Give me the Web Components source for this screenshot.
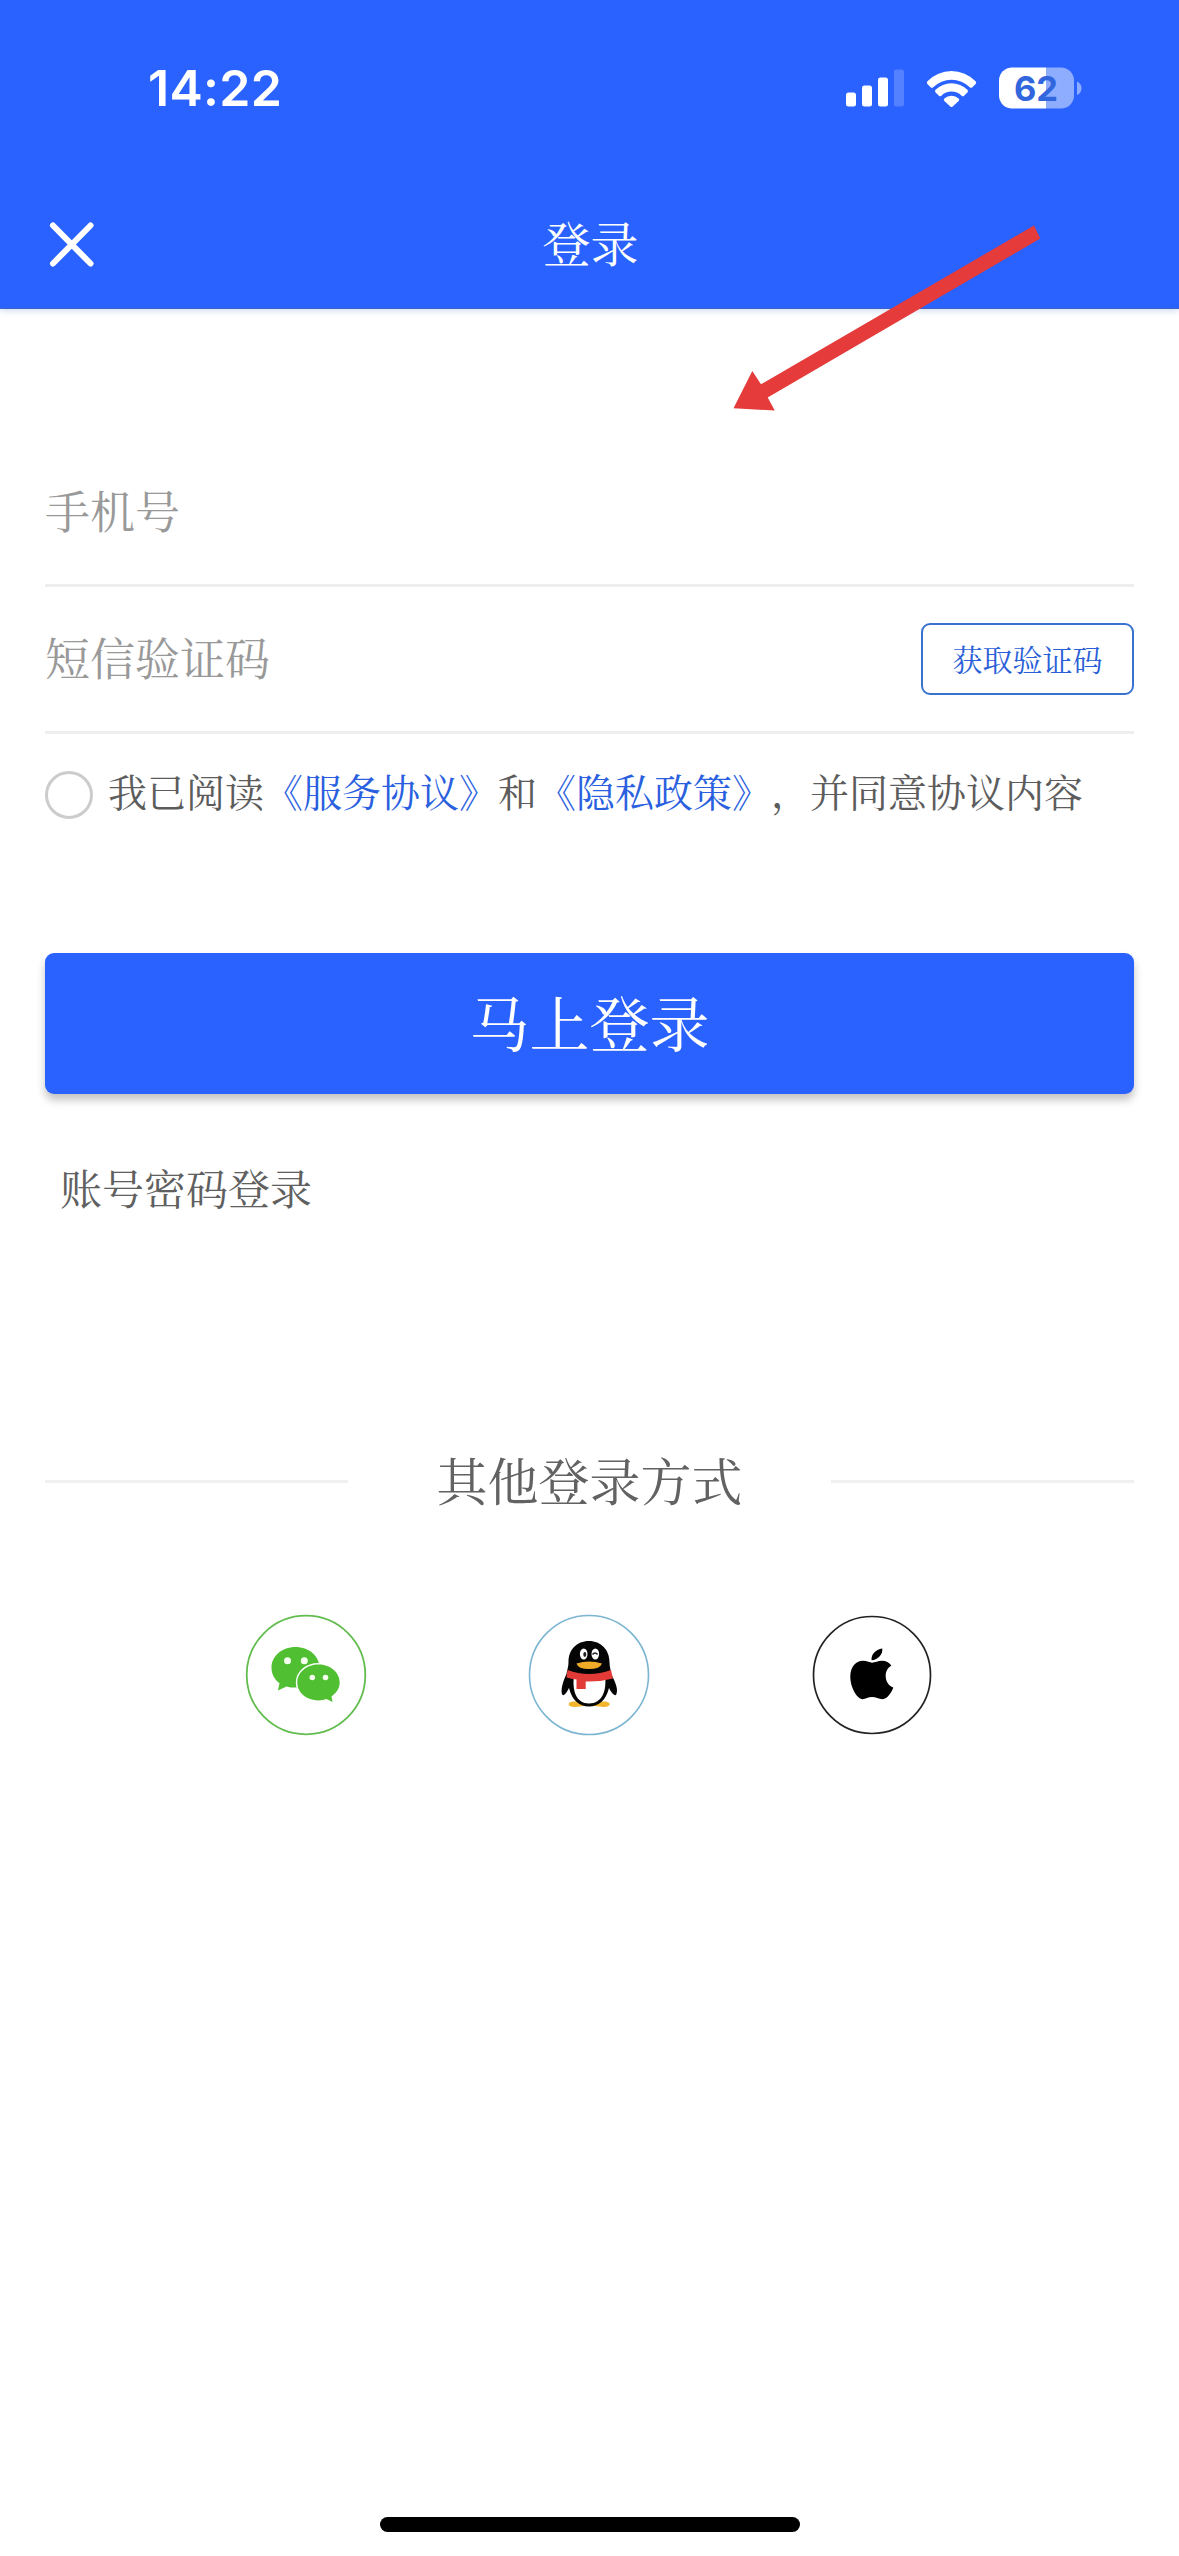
<!DOCTYPE html>
<html lang="zh-CN">
<head>
<meta charset="utf-8">
<title>登录</title>
<style>
html,body{margin:0;background:#fff}
body{width:1179px;height:2556px;overflow:hidden;font-family:"Noto Serif CJK SC","Noto Serif SC","Source Han Serif SC","Songti SC","Noto Sans CJK SC",serif;color:#666;text-spacing-trim:space-all}
</style>
</head>
<body>
<login-page></login-page>
<script>
const define = (name, html) => customElements.define(name, class extends HTMLElement {
  constructor() {
    super();
    const t = document.createElement('template');
    t.innerHTML = html;
    this.attachShadow({mode: 'open'}).appendChild(t.content.cloneNode(true));
  }
});

define('status-bar', `
<style>
:host{display:flex;justify-content:space-between;align-items:center;height:175px;padding:0 99px 0 148px;box-sizing:border-box;color:#fff;font-family:Inter,"Liberation Sans",sans-serif}
time{font-size:50px;font-weight:600;line-height:60px;letter-spacing:.3px}
.r{display:flex}
svg{display:block}
</style>
<time>14:22</time>
<div class="r"><svg width="240" height="60" viewBox="840 57.5 240 60" overflow="visible">
<g fill="#fff"><rect x="846" y="92" width="10" height="14" rx="2.5"/><rect x="862" y="85" width="10" height="21" rx="2.5"/><rect x="878" y="77" width="10" height="29" rx="2.5"/><rect x="894" y="69" width="10" height="37" rx="2.5" opacity=".2"/>
<path d="M927.4 80.8a33.500 33.500 0 0 1 48.200 0q1.300 1.400 0 2.700l-3.200 3.200q-1.300 1.200-2.600 0a26 26 0 0 0-36.600 0q-1.300 1.200-2.600 0l-3.200-3.200q-1.300-1.300 0-2.700z"/>
<path d="M935.600 89.300a22.500 22.500 0 0 1 31.800 0q1.300 1.300 0 2.600l-3.300 3.300q-1.200 1.100-2.500 0a14.500 14.500 0 0 0-20.200 0q-1.300 1.100-2.500 0l-3.300-3.300q-1.300-1.300 0-2.600z"/>
<path d="M944.300 98a10.500 10.500 0 0 1 14.400 0q1.100 1.200 0 2.400l-6 5.600q-1.200 1-2.400 0l-6-5.600q-1.100-1.200 0-2.400z"/>
<path d="M1012 67H1046V108H1012a13 13 0 0 1-13-13V80a13 13 0 0 1 13-13z"/>
<path d="M1046 67H1061a13 13 0 0 1 13 13V95a13 13 0 0 1-13 13H1046z" opacity=".48"/>
<path d="M1077 81q4.500 2 4.500 6.800t-4.500 6.800z" opacity=".48"/></g>
<text x="1036" y="100.300" font-size="34.500" font-weight="700" text-anchor="middle" fill="#3166dd">62</text>
</svg></div>`);

define('nav-bar', `
<style>
:host{display:grid;grid-template-columns:100px 1fr 98px;align-items:center;height:133px;color:#fff}
svg{display:block;margin:5px 0 0 46px}
h1{margin:0;font-size:48px;line-height:70px;font-weight:400;text-align:center}
</style>
<svg width="52" height="52" viewBox="0 0 52 52"><path d="M7 7.500 44.500 45.500M44.500 7.500 7 45.500" stroke="#fff" stroke-width="6" stroke-linecap="round"/></svg>
<h1><slot></slot></h1>`);

define('form-field', `
<style>
:host{display:flex;justify-content:space-between;align-items:center;height:147px;box-sizing:border-box;border-bottom:3px solid #eee;color:#999;font-size:45px;line-height:60px}
span{padding-bottom:4px}
</style>
<span><slot></slot></span><slot name="action"></slot>`);

define('outline-button', `
<style>
:host{display:flex;align-items:center;justify-content:center;width:213px;height:72px;box-sizing:border-box;border:2px solid #3a72cf;border-radius:9px;color:#2a5fd8;font-size:30px;line-height:40px;padding-bottom:3px}
</style>
<slot></slot>`);

define('agree-row', `
<style>
:host{display:flex;align-items:center;height:48px;margin-top:37px;font-size:39px;color:#5c5c5c;white-space:nowrap;line-height:48px}
i{flex:none;width:48px;height:48px;box-sizing:border-box;border:3px solid #ccc;border-radius:50%;margin-right:15px}
span{padding-bottom:10px}
b{font-weight:400;color:#2a5fe0}
</style>
<i></i><span>我已阅读<b>《服务协议》</b>和<b>《隐私政策》</b>，并同意协议内容</span>`);

define('primary-button', `
<style>
:host{display:flex;align-items:center;justify-content:center;height:141px;margin-top:134px;background:#2962ff;border-radius:9px;color:#fff;font-size:60px;line-height:80px;box-shadow:0 6px 9px rgba(0,0,0,.24);box-sizing:border-box;padding-bottom:5px}
</style>
<slot></slot>`);

define('section-divider', `
<style>
:host{display:flex;align-items:center;justify-content:space-between;height:70px;margin-top:226px;font-size:51px;line-height:70px;color:#626262}
i{width:303px;height:3px;background:#f0f0f0}
span{padding-bottom:5px}
</style>
<i></i><span><slot></slot></span><i></i>`);

define('social-logins', `
<style>
:host{display:flex;justify-content:space-between;margin:98px 201px 0 200px}
svg{display:block}
</style>
<svg width="122" height="122" viewBox="-61 -61 122 122">
<circle r="59.300" fill="#fff" stroke="#62bd4e" stroke-width="1.800"/>
<g fill="#51bf32"><path d="M-10.500-28C-24-28-34.500-19-34.500-7.500-34.500-.9-31.500 4.500-26.500 8.300L-28 15.500-19.500 11.400Q-15 12.700-10.500 12.600C3 12.600 13.500 4 13.500-7.500 13.500-19 3-28-10.500-28z"/>
<path d="M12.500-10.500C.7-10.500-8.700-2.700-8.700 7.500S.7 25.400 12.500 25.400Q17 25.400 20.500 24.100L26.500 27 25.500 21.400C30.500 18 33.700 13.200 33.700 7.500 33.700-2.700 24.300-10.500 12.500-10.500z" stroke="#fff" stroke-width="3" paint-order="stroke"/></g>
<g fill="#f4fff0"><circle cx="-18.500" cy="-14.300" r="3.500"/><circle cx="-1.700" cy="-14.300" r="3.500"/><circle cx="6.300" cy="2.500" r="2.800"/><circle cx="19.500" cy="2.500" r="2.800"/></g></svg>
<svg width="122" height="122" viewBox="-61 -61 122 122">
<circle r="59.500" fill="#fff" stroke="#7bb5d2" stroke-width="1.600"/>
<path d="M-16 26.500C-22 27-22 32-14 32L0 30.500 15 32C23 31.500 22 27 16 26.500z" fill="#f3b52b"/>
<path d="M0-34C-12.500-34-20.500-25-20.500-13-20.500-8-22-5-22.500-1-26 6-29 16-26.500 20-24.500 21-22 17-20 13-17 25-10 31.500 0 31.500S17 25 20 13C22 17 25 21 27 20 30 15 26 6 22-1 22-5 20.500-8 20.500-13 20.500-25 12-34 0-34z" fill="#050505"/>
<path d="M-15 0C-17 16-13 28.500 0 28.500S18 16 16 0z" fill="#fff"/>
<path d="M-21.500-5Q0 3 22-5L24 3.500Q11 7-3.300 6.500V14H-12.500V4.500Q-18 4-22.500 2.500z" fill="#e23a36"/>
<ellipse cx="-5.300" cy="-21" rx="3.800" ry="5.500" fill="#fff"/><ellipse cx="6.300" cy="-21" rx="3.800" ry="5.500" fill="#fff"/><ellipse cx="-4.200" cy="-20.500" rx="1.500" ry="2.400" fill="#222"/><path d="M3.500-20.500q2.500-3 5 0" fill="none" stroke="#222" stroke-width="1.600"/>
<path d="M-12.500-11.500Q0-15.500 13-11.500 11-6 0-6T-12.500-11.500z" fill="#efab28"/></svg>
<svg width="122" height="122" viewBox="-61 -61 122 122">
<circle r="58.500" fill="#fff" stroke="#222" stroke-width="1.700"/>
<path d="M0-12.300C3-12.300 6-14.200 10-14.200 14-14.200 17.200-12.500 19.300-9.500 15-6.500 13.700-3 13.700 1 13.700 6.500 16.500 10.500 21.300 12.500 19.500 17.500 15.500 23.800 10.500 24.200 6.500 24.200 4 22 0 22S-6 24.200-9.500 24.200C-15.500 23.500-21.700 12-21.700 1.500-21.700-8.500-15.500-14.200-9-14.200-5-14.200-2-12.300 0-12.300z"/>
<path d="M10.200-26.600C3.500-25.500-1.200-20.500-.4-14.800 6-15.200 11.200-21 10.200-26.600z"/></svg>`);

define('login-page', `
<style>
:host{display:flex;flex-direction:column;height:2556px;position:relative}
header{height:308px;background:#2962ff;border-bottom:1px solid #3f63c5;box-shadow:0 1px 7px rgba(40,90,190,.28);flex:none}
main{display:flex;flex-direction:column;padding:131px 45px 0}
.alt{margin:60px 0 0 15px;font-size:42px;line-height:66px;color:#606060}
.home{width:420px;height:15px;border-radius:8px;background:#000;margin:auto auto 24px}
.arrow{position:absolute;left:720px;top:215px}
</style>
<header><status-bar></status-bar><nav-bar>登录</nav-bar></header>
<main>
<form-field>手机号</form-field>
<form-field>短信验证码<outline-button slot="action">获取验证码</outline-button></form-field>
<agree-row></agree-row>
<primary-button>马上登录</primary-button>
<div class="alt">账号密码登录</div>
<section-divider>其他登录方式</section-divider>
<social-logins></social-logins>
</main>
<div class="home"></div>
<svg class="arrow" width="330" height="205" viewBox="720 215 330 205"><path d="M733.500 408.300 752.300 371 761 384.300 1034 225.500 1040.300 238.500 767.700 397.500 774.800 410.500z" fill="#e53b3b"/></svg>`);
</script>
</body>
</html>
